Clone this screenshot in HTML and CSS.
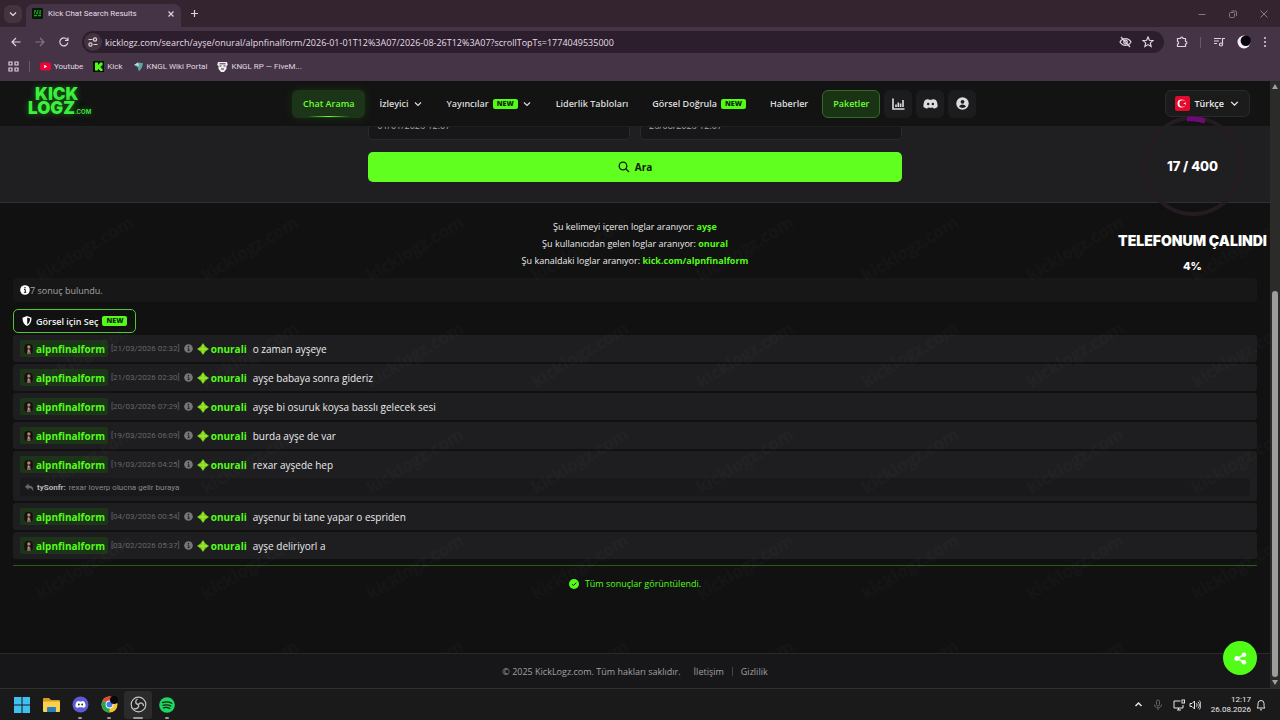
FILE: index.html
```html
<!DOCTYPE html>
<html lang="tr">
<head>
    <meta charset="UTF-8">
    <meta name="viewport" content="width=device-width, initial-scale=1.0">
    <title>Kick Chat Search Results</title>
    <link rel="stylesheet" href="styles.css">
</head>
<body>
    <svg width="0" height="0" class="defs" aria-hidden="true">
        <symbol id="chevron" viewBox="0 0 10 10"><path d="M2 3.5l3 3 3-3" fill="none" stroke="currentColor" stroke-width="1.2"/></symbol>
        <symbol id="info" viewBox="0 0 10 10"><circle cx="5" cy="5" r="4.8" fill="currentColor"/><path d="M4 4.5h1.3v2.8M3.9 7.3h2.4" fill="none" stroke="#1c1c20" stroke-width="1"/><circle cx="5" cy="2.7" r=".8" fill="#1c1c20"/></symbol>
        <symbol id="spark" viewBox="0 0 12 12"><path d="M6 0l2.400 3.600L12 6 8.400 8.400 6 12 3.600 8.400 0 6l3.600-2.400z" fill="#76cf1c"/><path d="M6 2v8M2 6h8" stroke="#a2e629" stroke-width="1.400"/></symbol>
        <symbol id="avatar" viewBox="0 0 10 12"><rect width="10" height="12" rx="4" fill="#14100f"/><circle cx="5.4" cy="3.6" r="2" fill="#b9826c"/><path d="M3 12l.8-5.2 3.2-.3.8 5.5z" fill="#8d5f5a"/><path d="M4.6 6.5l1.2 3" stroke="#d8c0b8"/></symbol>
        <symbol id="discord" viewBox="0 0 16 12"><path d="M5.6.6C4.300.8 3 1.200 2.200 1.700.9 3.800.300 6.200.5 9.200c1.200.9 2.500 1.600 3.900 1.900l.9-1.400c1.700.5 3.700.5 5.400 0l.9 1.400c1.400-.3 2.700-1 3.900-1.900.3-3-.4-5.400-1.700-7.500C13 1.200 11.700.8 10.400.6L9.900 1.500H6.100z" fill="currentColor"/><ellipse cx="5.500" cy="6" rx="1.300" ry="1.400" class="hole"/><ellipse cx="10.500" cy="6" rx="1.300" ry="1.400" class="hole"/></symbol>
    </svg>

    <div class="tabs">
        <button class="tab-search" aria-label="Search tabs"><svg width="10" height="10"><use href="#chevron"/></svg></button>
        <div class="tab">
            <svg width="11" height="11" viewBox="0 0 11 11"><rect width="11" height="11" rx="1" fill="#061806"/><path d="M2 3h2M5 3h1.500M7.500 3H9M2 5h1M4 5h2M7 5h2M2 7.500h3M6 7.500h3" stroke="#23a823" stroke-width="1.500"/></svg>
            <span class="tab-title">Kick Chat Search Results</span>
            <svg width="8" height="8" viewBox="0 0 8 8"><path d="M1.500 1.500l5 5M6.500 1.500l-5 5" stroke="#ddd2dd" stroke-width="1.200"/></svg>
        </div>
        <button class="tab-new" aria-label="New tab"><svg width="9" height="9" viewBox="0 0 9 9"><path d="M4.500 1v7M1 4.500h7" stroke="#ddd2dd" stroke-width="1.200"/></svg></button>
        <div class="window-buttons">
            <svg width="10" height="10" viewBox="0 0 10 10"><path d="M1.500 5.500h7"/></svg>
            <svg width="10" height="10" viewBox="0 0 10 10"><rect x="1.500" y="3.500" width="5" height="5" rx="1"/><path d="M3.500 2h4a1 1 0 0 1 1 1v4"/></svg>
            <svg width="10" height="10" viewBox="0 0 10 10"><path d="M1.500 1.500l7 7M8.500 1.500l-7 7"/></svg>
        </div>
    </div>

    <div class="toolbar">
        <svg class="line" width="12" height="12" viewBox="0 0 12 12"><path d="M10.500 6H2M6 2L2 6l4 4"/></svg>
        <svg class="line dim" width="12" height="12" viewBox="0 0 12 12"><path d="M1.500 6H10M6 2l4 4-4 4"/></svg>
        <svg class="line" width="12" height="12" viewBox="0 0 12 12"><path d="M9.800 6.500a4 4 0 1 1-1-3.300L10 4.300M10 1.500v3H7"/></svg>
        <div class="address">
            <span class="site"><svg class="line" width="12" height="12" viewBox="0 0 12 12"><path d="M5.500 3.500H1.500M10.500 8.500H6.500"/><circle cx="8" cy="3.500" r="1.600"/><circle cx="3.500" cy="8.500" r="1.600"/></svg></span>
            <input class="url" aria-label="Address" value="kicklogz.com/search/ayşe/onural/alpnfinalform/2026-01-01T12%3A07/2026-08-26T12%3A07?scrollTopTs=1774049535000">
            <svg class="line" width="13" height="12" viewBox="0 0 13 12"><path d="M1 6c2.500-4.500 8.500-4.500 11 0-2.500 4.500-8.500 4.500-11 0z"/><circle cx="6.500" cy="6" r="1.800"/><path d="M2 1l9 10"/></svg>
            <svg class="line" width="12" height="12" viewBox="0 0 12 12"><path d="M6 1l1.400 3.300 3.600.3-2.700 2.300.8 3.600L6 8.600l-3.100 1.900.8-3.600L1 4.600l3.600-.3z"/></svg>
        </div>
        <svg class="line" width="12" height="12" viewBox="0 0 12 12"><path d="M1.500 2.500h3C4.500.6 7 .6 7 2.500h2.500v3c1.900 0 1.900 2.500 0 2.500v2.500h-8V8c1.500 0 1.500-2.500 0-2.500z"/></svg>
        <span class="rule"></span>
        <svg class="line" width="12" height="12" viewBox="0 0 12 12"><path d="M1 2.500h7M1 5h5M1 7.500h3M9.500 8.500v-6H12"/><circle cx="8" cy="8.500" r="1.500"/></svg>
        <svg width="14" height="14" viewBox="0 0 14 14"><circle cx="7" cy="7" r="6.500" fill="#f4eef8"/><circle cx="8.800" cy="5.800" r="5.200" fill="#08060a"/></svg>
        <svg width="4" height="12" viewBox="0 0 4 12" fill="#ddd2dd"><circle cx="2" cy="2" r="1"/><circle cx="2" cy="6" r="1"/><circle cx="2" cy="10" r="1"/></svg>
    </div>

    <div class="bookmarks">
        <svg class="line" width="11" height="11" viewBox="0 0 11 11"><path d="M1 1h3v3H1zM7 1h3v3H7zM1 7h3v3H1zM7 7h3v3H7z"/></svg>
        <span class="rule"></span>
        <a href="#"><svg width="11" height="11" viewBox="0 0 11 11"><rect y="1.500" width="11" height="8" rx="2" fill="#f00036"/><path d="M4.200 3.700v3.600l3-1.800z" fill="#fff"/></svg>Youtube</a>
        <a href="#"><svg width="11" height="11" viewBox="0 0 11 11"><rect width="11" height="11" fill="#051005"/><path d="M2 1.500h3v2h1v-1h1v-1h2.500v3h-1v1h-1v1h1v1h1v2.500H7V9H6V8H5v1.500H2z" fill="#53fc18"/></svg>Kick</a>
        <a href="#"><svg width="11" height="11" viewBox="0 0 11 11"><path d="M1 4l4-2.500 5 .8-1 4.200-3 4L4.500 6z" fill="#5aa9a5"/><path d="M1 4l4-2.500L6 5z" fill="#bfe0df"/></svg>KNGL Wiki Portal</a>
        <a href="#"><svg width="11" height="11" viewBox="0 0 11 11"><path d="M1 1h9l.8 3-1.300 1v3L7 11H4L1.500 8V5L.2 4z" fill="#f1ecf1"/><path d="M2.500 5h2M6.500 5h2M4 8h3M2.500 2.800h6" stroke="#40303f" stroke-width="1"/></svg>KNGL RP — FiveM...</a>
    </div>

    <div class="viewport">
        <div class="page">
            <header class="header">
                <a class="logo" href="#" aria-label="KickLogz.com"><span>KICK</span><span>LOGZ<small>.COM</small></span></a>
                <nav class="nav">
                    <a class="active" href="#">Chat Arama</a>
                    <a href="#">İzleyici <svg width="10" height="10"><use href="#chevron"/></svg></a>
                    <a href="#">Yayıncılar <span class="new">NEW</span><svg width="10" height="10"><use href="#chevron"/></svg></a>
                    <a href="#">Liderlik Tabloları</a>
                    <a href="#">Görsel Doğrula <span class="new">NEW</span></a>
                    <a href="#">Haberler</a>
                    <a class="plans" href="#">Paketler</a>
                    <a class="square" href="#" aria-label="Stats"><svg width="13" height="12" viewBox="0 0 13 12"><path d="M1 .5V11h11.500M4 9V6.500M6.300 9V4.500M8.600 9V5.500M11 9V2" fill="none" stroke="currentColor" stroke-width="1.600"/></svg></a>
                    <a class="square" href="#" aria-label="Discord"><svg width="15" height="12"><use href="#discord"/></svg></a>
                    <a class="square" href="#" aria-label="Account"><svg width="13" height="13" viewBox="0 0 13 13"><circle cx="6.500" cy="6.500" r="6.200" fill="currentColor"/><circle cx="6.500" cy="4.800" r="1.900" fill="#1c1c1e"/><path d="M3 9.600c1.500-2.800 5.500-2.800 7 0-1.500 1.900-5.500 1.900-7 0z" fill="#1c1c1e"/></svg></a>
                </nav>
                <button class="lang">
                    <svg width="15" height="15" viewBox="0 0 15 15"><rect width="15" height="15" rx="2" fill="#e30a2d"/><circle cx="6.500" cy="7.500" r="4" fill="#fff"/><circle cx="7.600" cy="7.500" r="3.200" fill="#e30a2d"/><path d="M8.300 7.500l3-1.200-.9 1.200.9 1.200z" fill="#fff"/></svg>
                    Türkçe
                    <svg width="11" height="11"><use href="#chevron"/></svg>
                </button>
            </header>

            <section class="search">
                <form class="search-form">
                    <div class="dates">
                        <input type="text" aria-label="Başlangıç" value="01/01/2026 12:07">
                        <input type="text" aria-label="Bitiş" value="26/08/2026 12:07">
                    </div>
                    <button type="button" class="submit"><svg width="12" height="12" viewBox="0 0 12 12"><circle cx="5" cy="5" r="3.800"/><path d="M8 8l3 3"/></svg>Ara</button>
                </form>
            </section>

            <main class="main">
                <svg class="watermark" aria-hidden="true">
                    <defs><pattern id="mark" width="165" height="106" patternUnits="userSpaceOnUse"><text x="0" y="0" transform="translate(41 79) rotate(-31)">kicklogz.com</text></pattern></defs>
                    <rect width="100%" height="100%" fill="url(#mark)"/>
                </svg>

                <div class="summary">
                    <p>Şu kelimeyi içeren loglar aranıyor: <b>ayşe</b></p>
                    <p>Şu kullanıcıdan gelen loglar aranıyor: <b>onural</b></p>
                    <p>Şu kanaldaki loglar aranıyor: <b>kick.com/alpnfinalform</b></p>
                </div>

                <div class="count"><svg width="10" height="10"><use href="#info"/></svg>7 sonuç bulundu.</div>

                <button class="select"><svg width="10" height="10" viewBox="0 0 10 10"><path d="M5 0l4.500 1.700C9.500 6 8 8.800 5 10 2 8.800.5 6 .5 1.700z" fill="#fff"/><path d="M5.200 1.500l2.900 1.100C8 5.500 7 7.500 5.200 8.500z" fill="#111"/></svg>Görsel için Seç <span class="new">NEW</span></button>

                <ul class="logs">
                    <li><div class="entry"><a class="channel" href="#"><svg width="9" height="10"><use href="#avatar"/></svg>alpnfinalform</a><time>[21/03/2026 02:32]</time><svg class="about" width="9" height="9"><use href="#info"/></svg><svg class="spark" width="12" height="12"><use href="#spark"/></svg><b>onurali</b><span>o zaman ayşeye</span></div></li>
                    <li><div class="entry"><a class="channel" href="#"><svg width="9" height="10"><use href="#avatar"/></svg>alpnfinalform</a><time>[21/03/2026 02:30]</time><svg class="about" width="9" height="9"><use href="#info"/></svg><svg class="spark" width="12" height="12"><use href="#spark"/></svg><b>onurali</b><span>ayşe babaya sonra gideriz</span></div></li>
                    <li><div class="entry"><a class="channel" href="#"><svg width="9" height="10"><use href="#avatar"/></svg>alpnfinalform</a><time>[20/03/2026 07:29]</time><svg class="about" width="9" height="9"><use href="#info"/></svg><svg class="spark" width="12" height="12"><use href="#spark"/></svg><b>onurali</b><span>ayşe bi osuruk koysa basslı gelecek sesi</span></div></li>
                    <li><div class="entry"><a class="channel" href="#"><svg width="9" height="10"><use href="#avatar"/></svg>alpnfinalform</a><time>[19/03/2026 06:09]</time><svg class="about" width="9" height="9"><use href="#info"/></svg><svg class="spark" width="12" height="12"><use href="#spark"/></svg><b>onurali</b><span>burda ayşe de var</span></div></li>
                    <li>
                        <div class="entry"><a class="channel" href="#"><svg width="9" height="10"><use href="#avatar"/></svg>alpnfinalform</a><time>[19/03/2026 04:25]</time><svg class="about" width="9" height="9"><use href="#info"/></svg><svg class="spark" width="12" height="12"><use href="#spark"/></svg><b>onurali</b><span>rexar ayşede hep</span></div>
                        <div class="reply"><svg width="9" height="9" viewBox="0 0 9 9"><path d="M3.500.5v2C7 2.500 9 4.500 8 8.500 7.500 6 6 5 3.500 5v2L0 3.700z" fill="#66666c"/></svg><strong>tySonfr:</strong><span>rexar loverp olucna gelir buraya</span></div>
                    </li>
                    <li><div class="entry"><a class="channel" href="#"><svg width="9" height="10"><use href="#avatar"/></svg>alpnfinalform</a><time>[04/03/2026 00:54]</time><svg class="about" width="9" height="9"><use href="#info"/></svg><svg class="spark" width="12" height="12"><use href="#spark"/></svg><b>onurali</b><span>ayşenur bi tane yapar o espriden</span></div></li>
                    <li><div class="entry"><a class="channel" href="#"><svg width="9" height="10"><use href="#avatar"/></svg>alpnfinalform</a><time>[03/02/2026 05:37]</time><svg class="about" width="9" height="9"><use href="#info"/></svg><svg class="spark" width="12" height="12"><use href="#spark"/></svg><b>onurali</b><span>ayşe deliriyorl a</span></div></li>
                </ul>

                <div class="end"><svg width="10" height="10" viewBox="0 0 10 10"><circle cx="5" cy="5" r="5" fill="#53fc18"/><path d="M3 5l1.500 1.500L7.200 3.700" fill="none" stroke="#111" stroke-width="1"/></svg>Tüm sonuçlar görüntülendi.</div>
            </main>

            <footer class="footer">
                <span>© 2025 KickLogz.com. Tüm hakları saklıdır.</span>
                <a href="#">İletişim</a>
                <i></i>
                <a href="#">Gizlilik</a>
            </footer>

            <button class="share" aria-label="Paylaş"><svg width="13" height="13" viewBox="0 0 13 13"><path d="M10 2.800L3.300 6.500l6.700 3.700" fill="none" stroke="#fff" stroke-width="1.600"/><circle cx="10" cy="2.800" r="2.300"/><circle cx="2.900" cy="6.500" r="2.500"/><circle cx="10" cy="10.200" r="2.300"/></svg></button>

            <!-- stream goal overlay -->
            <div class="goal">
                <div class="ring">
                    <svg width="104" height="104" viewBox="0 0 104 104"><circle cx="52" cy="52" r="48" fill="none" stroke="#251b22" stroke-width="4"/><path d="M46 5a48 48 0 0 1 18 2" fill="none" stroke="#6d0a78" stroke-width="5"/></svg>
                    <span>17 / 400</span>
                </div>
                <strong>TELEFONUM ÇALINDI</strong>
                <em>4%</em>
            </div>
        </div>

        <div class="scrollbar">
            <svg width="6" height="5" viewBox="0 0 6 5"><path d="M3 0l3 5H0z"/></svg>
            <div class="track"><div class="thumb"></div></div>
            <svg width="6" height="5" viewBox="0 0 6 5"><path d="M3 5l3-5H0z"/></svg>
        </div>
    </div>

    <div class="taskbar">
        <div class="apps">
            <button aria-label="Start"><svg width="16" height="16" viewBox="0 0 16 16"><path d="M0 0h7.500v7.500H0zM8.500 0H16v7.500H8.500zM0 8.500h7.500V16H0zM8.500 8.500H16V16H8.500z" fill="#3fc0f0"/></svg></button>
            <button aria-label="Explorer"><svg width="17" height="16" viewBox="0 0 17 16"><path d="M0 2a1 1 0 0 1 1-1h5l2 2h8a1 1 0 0 1 1 1v3H0z" fill="#d99a1c"/><rect y="4.500" width="17" height="10.500" rx="1" fill="#fbd04f"/><path d="M4 15v-4a1 1 0 0 1 1-1h7a1 1 0 0 1 1 1v4z" fill="#2480bd"/></svg></button>
            <button class="open discord" aria-label="Discord"><svg width="17" height="17" viewBox="0 0 17 17"><circle cx="8.500" cy="8.500" r="8" fill="#5b5bd6"/><use href="#discord" x="3" y="4.500" width="11" height="8"/></svg></button>
            <button class="open" aria-label="Chrome"><svg width="17" height="17" viewBox="0 0 17 17"><circle cx="8.500" cy="8.500" r="8" fill="#f6c52d"/><path d="M8.500 8.500L1.600 4.500A8 8 0 0 1 15.400 4.500z" fill="#e3483a"/><path d="M8.500 8.500L1.600 4.500a8 8 0 0 0 6.900 12z" fill="#2ba24c"/><circle cx="8.500" cy="8.500" r="3.900" fill="#fff"/><circle cx="8.500" cy="8.500" r="3" fill="#3f80ea"/><circle cx="13" cy="4" r="4" fill="#09070a"/></svg></button>
            <button class="open current" aria-label="OBS"><svg width="17" height="17" viewBox="0 0 17 17"><circle cx="8.500" cy="8.500" r="7.300" fill="#222" stroke="#c4c4c4" stroke-width="1.200"/><path d="M8.500 8.500C5 8 5 4.500 7.500 3M8.500 8.500c2-3 5-1 5 1.500M8.500 8.500c1 3.500-2 5-4.800 3.800" fill="none" stroke="#bbb" stroke-width="1.400"/></svg></button>
            <button class="open" aria-label="Spotify"><svg width="16" height="16" viewBox="0 0 16 16"><circle cx="8" cy="8" r="7.800" fill="#1ed760"/><path d="M3.500 5.600c3-1 6.500-.8 9.200.7M4 8.300c2.700-.8 5.500-.5 7.800.7M4.500 10.800c2.200-.6 4.400-.4 6.400.7" fill="none" stroke="#0d2114" stroke-width="1.300" stroke-linecap="round"/></svg></button>
        </div>
        <div class="tray">
            <svg width="9" height="9" viewBox="0 0 9 9"><path d="M1.500 6l3-3 3 3" stroke-width="1.500"/></svg>
            <svg class="muted" width="10" height="12" viewBox="0 0 10 12"><rect x="3.500" y="1" width="3" height="6" rx="1.500"/><path d="M1.500 5.500c0 4.500 7 4.500 7 0M5 9v2"/></svg>
            <span class="sound"><svg width="12" height="12" viewBox="0 0 12 12"><path d="M7.500 2H1v7h9V6M4 11h4M5.500 9v2"/><rect x="9" y="1" width="2.500" height="3"/></svg>
            <svg width="12" height="12" viewBox="0 0 12 12"><path d="M1 4.500h2L5.500 2v8L3 7.500H1zM7.300 4.300c1 1 1 2.400 0 3.400M8.900 2.800c1.900 1.900 1.900 4.500 0 6.400M10.300 1.500c2 2.500 2 6.500 0 9"/></svg></span>
            <div class="clock"><span>12:17</span><span>26.08.2026</span></div>
            <svg width="10" height="12" viewBox="0 0 10 12"><path d="M1 9c1-1 1-2 1-4.500a3 3 0 0 1 6 0C8 7 8 8 9 9zM4 10.800h2"/></svg>
        </div>
    </div>
</body>
</html>
```

FILE: styles.css
```css
* {
    box-sizing: border-box;
}
body {
    margin: 0;
    height: 100vh;
    display: flex;
    flex-direction: column;
    overflow: hidden;
    background-color: #111;
    color: #ececec;
    font-family: "Open Sans", "Noto Sans", sans-serif;
    font-size: 11px;
}
a {
    color: inherit;
    text-decoration: none;
}
button {
    border: 0;
    padding: 0;
    background: none;
    color: inherit;
    font-family: inherit;
}
svg {
    flex: none;
}
.defs {
    position: absolute;
}
.hole {
    fill: #1c1c1e;
}

/* browser */
.tabs {
    display: flex;
    align-items: center;
    height: 27px;
    padding: 0 11px 0 4px;
    background-color: #33242f;
    color: #e6dde6;
}
.tab-search {
    width: 18px;
    height: 18px;
    border-radius: 6px;
    background-color: #44343f;
    display: flex;
    align-items: center;
    justify-content: center;
}
.tab {
    display: flex;
    align-items: center;
    align-self: flex-end;
    gap: 5px;
    width: 155px;
    height: 23px;
    margin-left: 4px;
    padding: 0 6px 4px;
    border-radius: 7px 7px 0 0;
    background-color: #453446;
    font-family: Roboto, sans-serif;
    font-size: 8px;
}
.tab-title {
    flex: 1;
}
.tab-new {
    margin-left: 9px;
    display: flex;
}
.window-buttons {
    display: flex;
    gap: 21px;
    margin-left: auto;
}
.window-buttons svg {
    fill: none;
    stroke: #85778a;
}
.toolbar {
    display: flex;
    align-items: center;
    gap: 12px;
    height: 30px;
    padding: 0 13px 0 10px;
    background-color: #453446;
}
.line {
    fill: none;
    stroke: #ddd2dd;
    stroke-width: 1.2;
}
.dim {
    opacity: .4;
}
.address {
    flex: 1;
    display: flex;
    align-items: center;
    gap: 10px;
    height: 22px;
    padding: 0 10px 0 2px;
    border-radius: 11px;
    background-color: #2d1e2e;
}
.site {
    display: flex;
    align-items: center;
    justify-content: center;
    width: 18px;
    height: 18px;
    border-radius: 9px;
    background-color: #44343f;
}
.url {
    flex: 1;
    margin-left: -7px;
    padding: 0;
    border: 0;
    outline: 0;
    background: none;
    color: #e6dde6;
    font-family: inherit;
    font-size: 9px;
}
.rule {
    width: 1px;
    height: 11px;
    background-color: #6a586b;
}
.bookmarks {
    display: flex;
    align-items: center;
    gap: 10px;
    height: 24px;
    padding: 0 8px 6px;
    background-color: #453446;
    color: #e0d6e0;
    font-family: Roboto, sans-serif;
    font-size: 8px;
}
.bookmarks a {
    display: flex;
    align-items: center;
    gap: 3px;
}

/* page */
.viewport {
    flex: 1;
    display: flex;
    min-height: 0;
}
.page {
    position: relative;
    flex: 1;
    display: flex;
    flex-direction: column;
    overflow: hidden;
}
.header {
    display: flex;
    align-items: center;
    justify-content: space-between;
    height: 46px;
    padding: 0 20px 0 28px;
    background-color: #131313;
    border-bottom: 1px solid #202022;
}
.logo {
    display: flex;
    flex-direction: column;
    width: 76px;
    padding-bottom: 2px;
    color: #3df03d;
    font-family: Inter, sans-serif;
    font-size: 17px;
    font-weight: 900;
    line-height: 14px;
    text-shadow: 0 0 6px #1c7a1c;
}
.logo span:first-child {
    padding-left: 7px;
}
.logo small {
    font-size: 6px;
    font-weight: 600;
}
.nav {
    display: flex;
    align-items: center;
    gap: 4px;
    color: #dcdcdc;
    font-size: 9px;
    font-weight: 600;
}
.nav a {
    position: relative;
    display: flex;
    align-items: center;
    gap: 4px;
    height: 28px;
    padding: 0 10px;
    border-radius: 6px;
}
.nav .active {
    padding: 0 11px;
    background-color: #1c3518;
    color: #6dff35;
    box-shadow: 0 0 8px #17300f;
}
.nav .active::after {
    content: "";
    position: absolute;
    left: 15px;
    right: 15px;
    bottom: 1px;
    height: 1px;
    background: linear-gradient(90deg, transparent, #6dff35, transparent);
}
.nav .plans {
    border: 1px solid #336a25;
    background-color: #1a3314;
    color: #6dff35;
}
.nav .square {
    justify-content: center;
    width: 28px;
    padding: 0;
    background-color: #1c1c1e;
}
.new {
    padding: 0 4px;
    border-radius: 2px;
    background-color: #53fc18;
    color: #102a08;
    font-size: 7px;
    font-weight: 800;
    line-height: 10px;
}
.lang {
    display: flex;
    align-items: center;
    gap: 5px;
    height: 27px;
    padding: 0 9px;
    border: 1px solid #29292b;
    border-radius: 6px;
    background-color: #1b1b1c;
    font-size: 9px;
    font-weight: 600;
}
.search {
    display: flex;
    flex-direction: column;
    justify-content: flex-end;
    align-items: center;
    height: 76px;
    padding-bottom: 20px;
    overflow: hidden;
    background-color: #1f1f22;
    border-bottom: 1px solid #303032;
}
.search-form {
    display: flex;
    flex-direction: column;
    gap: 12px;
    width: 42%;
}
.dates {
    display: flex;
    gap: 10px;
}
.dates input {
    flex: 1;
    min-width: 0;
    height: 30px;
    padding: 0 8px;
    border: 1px solid #29292c;
    border-radius: 5px;
    background-color: #17171a;
    color: #a8a8a8;
    font-family: inherit;
    font-size: 9px;
}
.submit {
    display: flex;
    align-items: center;
    justify-content: center;
    gap: 5px;
    height: 30px;
    border-radius: 5px;
    background-color: #60ff20;
    color: #0b1a06;
    font-size: 10px;
    font-weight: 700;
}
.submit svg {
    fill: none;
    stroke: #0b1a06;
    stroke-width: 1.3;
}
.main {
    position: relative;
    flex: 1;
    padding: 15px 13px 0;
}
.watermark {
    position: absolute;
    left: 0;
    top: 0;
    width: 100%;
    height: 100%;
    pointer-events: none;
    z-index: 1;
}
.watermark text {
    fill: #fff;
    fill-opacity: .014;
    font-size: 17px;
    font-weight: 700;
}
.summary {
    font-size: 9px;
    line-height: 17px;
    text-align: center;
}
.summary p {
    margin: 0;
}
.summary b {
    color: #53fc18;
}
.count {
    display: flex;
    align-items: center;
    height: 24px;
    margin-top: 9px;
    padding: 0 7px;
    border-radius: 4px;
    background-color: #171718;
    color: #a4a4a4;
    font-size: 9px;
}
.count svg {
    color: #fff;
}
.select {
    display: flex;
    align-items: center;
    gap: 4px;
    height: 24px;
    margin-top: 7px;
    padding: 0 8px;
    border: 1px solid #4fc92f;
    border-radius: 5px;
    color: #f2f2f2;
    font-size: 9px;
    font-weight: 600;
}
.logs {
    display: flex;
    flex-direction: column;
    gap: 2px;
    margin: 2px 0 0;
    padding: 0 0 6px;
    list-style: none;
    border-bottom: 1px solid #2a5a1a;
}
.logs li {
    border-radius: 3px;
    background-color: #1e1e21;
}
.entry {
    display: flex;
    align-items: center;
    height: 27px;
    padding: 0 7px;
}
.channel {
    display: flex;
    align-items: center;
    gap: 3px;
    height: 17px;
    padding: 0 3px 0 4px;
    border-radius: 2px;
    background-color: #1c3518;
    color: #53fc18;
    font-weight: 700;
    font-size: 10px;
}
.entry time {
    margin-left: 3px;
    color: #66666a;
    font-family: Roboto, sans-serif;
    font-size: 8px;
}
.about {
    margin: 0 4px;
    color: #77777b;
}
.spark {
    margin-right: 2px;
}
.entry b {
    margin-right: 6px;
    color: #53fc18;
    font-size: 10px;
}
.entry span {
    font-size: 10px;
}
.reply {
    display: flex;
    align-items: center;
    gap: 3px;
    height: 18px;
    margin: 0 7px 5px;
    padding: 0 5px;
    border-radius: 3px;
    background-color: #19191c;
    color: #88888c;
    font-family: Roboto, sans-serif;
    font-size: 8px;
}
.reply strong {
    color: #b5b5b8;
}
.end {
    display: flex;
    align-items: center;
    justify-content: center;
    gap: 6px;
    margin-top: 11px;
    color: #53fc18;
    font-size: 9px;
}
.footer {
    display: flex;
    align-items: center;
    justify-content: center;
    gap: 8px;
    height: 35px;
    border-top: 1px solid #29292b;
    background-color: #17171a;
    color: #a0a0a3;
    font-size: 9px;
}
.footer span {
    margin-right: 5px;
}
.footer i {
    width: 1px;
    height: 9px;
    background-color: #444;
}
.share {
    position: absolute;
    right: 13px;
    bottom: 13px;
    width: 34px;
    height: 34px;
    border-radius: 50%;
    background-color: #53fc18;
    display: flex;
    align-items: center;
    justify-content: center;
    fill: #fff;
    z-index: 2;
}
.goal {
    position: absolute;
    top: 33px;
    right: 0;
    width: 155px;
    display: flex;
    flex-direction: column;
    align-items: center;
    color: #fff;
    font-family: Inter, sans-serif;
    font-weight: 800;
    white-space: nowrap;
    pointer-events: none;
}
.ring {
    display: grid;
    place-items: center;
}
.ring > * {
    grid-area: 1 / 1;
}
.ring span {
    font-size: 13px;
}
.goal strong {
    margin-top: 14px;
    font-size: 14px;
    font-weight: 900;
}
.goal em {
    margin-top: 10px;
    font-size: 11px;
    font-style: normal;
}
.scrollbar {
    display: flex;
    flex-direction: column;
    align-items: center;
    gap: 3px;
    width: 10px;
    padding: 3px 0;
    background-color: #2b2b2a;
    fill: #a0a0a0;
}
.track {
    flex: 1;
    display: flex;
    align-items: flex-end;
}
.thumb {
    width: 6px;
    height: 66%;
    border-radius: 3px;
    background-color: #9c9c9c;
}

/* taskbar */
.taskbar {
    display: flex;
    justify-content: space-between;
    height: 32px;
    padding: 0 14px 0 8px;
    border-top: 1px solid #303030;
    background-color: #1b1a1b;
}
.apps {
    display: flex;
    align-items: center;
    gap: 1px;
}
.apps button {
    position: relative;
    display: flex;
    align-items: center;
    justify-content: center;
    width: 28px;
    height: 28px;
    border-radius: 3px;
}
.apps .current {
    background-color: #2c2b2c;
}
.apps .open::after {
    content: "";
    position: absolute;
    bottom: 0;
    width: 4px;
    height: 2px;
    border-radius: 1px;
    background-color: #999;
}
.apps .current::after {
    width: 10px;
}
.discord {
    color: #fff;
}
.tray {
    display: flex;
    align-items: center;
    gap: 10px;
}
.tray svg {
    fill: none;
    stroke: #e4e4e4;
}
.tray .muted {
    stroke: #666;
}
.sound {
    display: flex;
    gap: 4px;
}
.clock {
    display: flex;
    flex-direction: column;
    align-items: flex-end;
    margin-right: -5px;
    font-family: Roboto, sans-serif;
    font-size: 8px;
    line-height: 10px;
}
```
